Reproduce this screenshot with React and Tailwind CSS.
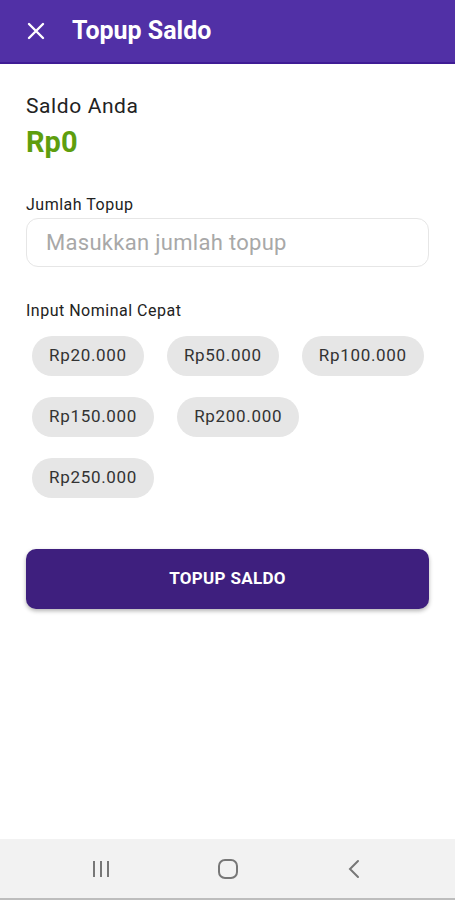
import React, { useState } from 'react';

const nominals = ['Rp20.000', 'Rp50.000', 'Rp100.000', 'Rp150.000', 'Rp200.000', 'Rp250.000'];

const App = () => {
  const [amount, setAmount] = useState('');

  return (
    <div className="w-[455px] h-[900px] bg-white flex flex-col font-['Roboto',sans-serif]">
      <div className="h-[64px] bg-[#5130a6] border-b-2 border-[#3f1c95] flex items-center px-[24px] gap-[24px] shrink-0">
        <svg width="24" height="24" viewBox="0 0 24 24" className="text-white">
          <path d="M5 5 L19 19 M19 5 L5 19" stroke="currentColor" strokeWidth="2.4" strokeLinecap="round" />
        </svg>
        <h1 className="text-white text-[25px] font-bold">Topup Saldo</h1>
      </div>

      <div className="flex-1 px-[26px] pt-[30px]">
        <p className="text-[21px] tracking-[0.6px] text-[#222] leading-[24px]">Saldo Anda</p>
        <p className="text-[29px] font-bold text-[#5e9e0e] leading-[32px] mt-[8px]">Rp0</p>

        <p className="text-[16px] tracking-[0.5px] text-[#222] mt-[38px] leading-[18px]">Jumlah Topup</p>
        <input
          value={amount}
          onChange={(e) => setAmount(e.target.value)}
          placeholder="Masukkan jumlah topup"
          className="mt-[4px] w-full h-[49px] rounded-[12px] border border-[#e6e6e6] px-[19px] text-[22px] tracking-[0.3px] text-[#333] placeholder:text-[#a8a8a8] outline-none"
        />

        <p className="text-[16px] tracking-[0.5px] text-[#222] mt-[35px] leading-[18px]">Input Nominal Cepat</p>
        <div className="mt-[16px] pl-[6px] flex flex-wrap gap-x-[23px] gap-y-[21px]">
          {nominals.map((n) => (
            <button
              key={n}
              onClick={() => setAmount(n.replace(/\D/g, ''))}
              className="h-[40px] px-[17px] rounded-full bg-[#e6e6e6] text-[17px] text-[#333] tracking-[0.7px]"
            >
              {n}
            </button>
          ))}
        </div>

        <button className="mt-[51px] w-full h-[60px] rounded-[10px] bg-[#3e1f7e] text-white text-[17px] font-bold tracking-[0.3px] shadow-[0_2px_4px_rgba(0,0,0,0.3)]">
          TOPUP SALDO
        </button>
      </div>

      <div className="h-[61px] bg-[#f2f2f2] border-b-2 border-[#bdbdbd] flex items-center justify-center gap-[105px] shrink-0">
        <svg width="22" height="20" viewBox="0 0 22 20">
          <path d="M4 2 V18 M11 2 V18 M18 2 V18" stroke="#777" strokeWidth="2" />
        </svg>
        <svg width="22" height="22" viewBox="0 0 22 22">
          <rect x="2" y="2" width="18" height="18" rx="6" fill="none" stroke="#777" strokeWidth="2" />
        </svg>
        <svg width="22" height="22" viewBox="0 0 22 22">
          <path d="M14 3 L6 11 L14 19" fill="none" stroke="#777" strokeWidth="2" strokeLinecap="round" />
        </svg>
      </div>
    </div>
  );
};

export default App;
